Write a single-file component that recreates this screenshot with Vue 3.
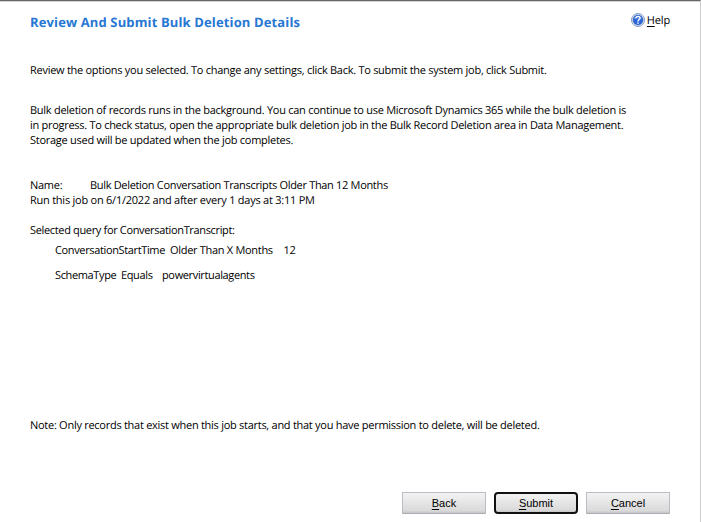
<script setup>
const criteria = [
  { field: 'ConversationStartTime', operator: 'Older Than X Months', value: '12', kind: 'time' },
  { field: 'SchemaType', operator: 'Equals', value: 'powervirtualagents', kind: 'schema' },
]
const buttons = [
  { key: 'B', rest: 'ack', primary: false },
  { key: 'S', rest: 'ubmit', primary: true },
  { key: 'C', rest: 'ancel', primary: false },
]
</script>

<template>
  <main class="dialog">
    <header>
      <h1>Review And Submit Bulk Deletion Details</h1>
      <a class="help">
        <svg width="14" height="14" viewBox="0 0 14 14">
          <circle cx="7" cy="7" r="6.5" fill="#e4edf8" stroke="#7793b8" stroke-width=".9" />
          <circle cx="7" cy="7" r="5" fill="#2d66d6" stroke="#2555b4" stroke-width=".5" />
          <path d="M3 6.4A4.1 4.1 0 0 1 11 6.4Q7 4.8 3 6.4Z" fill="#5b90ed" />
          <path d="M4.9 5.2C5 2.7 9.1 2.8 9.1 5C9.1 6.5 7 6.6 7 8.4" fill="none" stroke="#fff" stroke-width="1.4" />
          <rect x="6.3" y="9.4" width="1.4" height="1.4" fill="#fff" />
        </svg>
        <span><u>H</u>elp</span>
      </a>
    </header>
    <p class="intro"><span class="l1">Review the options you selected. To change any settings, click Back. To submit the system job, click Submit.</span></p>
    <p class="info">
      <span class="l2">Bulk deletion of records runs in the background. You can continue to use Microsoft Dynamics 365 while the bulk deletion is</span>
      <span class="l3">in progress. To check status, open the appropriate bulk deletion job in the Bulk Record Deletion area in Data Management.</span>
      <span class="l4">Storage used will be updated when the job completes.</span>
    </p>
    <section class="job">
      <div class="name"><span class="label">Name:</span><span class="l5">Bulk Deletion Conversation Transcripts Older Than 12 Months</span></div>
      <div class="l6">Run this job on 6/1/2022 and after every 1 days at 3:11 PM</div>
    </section>
    <section class="query">
      <div class="l7">Selected query for ConversationTranscript:</div>
      <div v-for="c in criteria" :key="c.field" class="row" :class="c.kind">
        <span class="field">{{ c.field }}</span><span class="op">{{ c.operator }}</span><span>{{ c.value }}</span>
      </div>
    </section>
    <p class="note"><span class="l8">Note: Only records that exist when this job starts, and that you have permission to delete, will be deleted.</span></p>
    <footer>
      <button v-for="b in buttons" :key="b.key" :class="{ primary: b.primary }"><span><u>{{ b.key }}</u>{{ b.rest }}</span></button>
    </footer>
  </main>
</template>

<style>
html, body { background: #fff; overflow: hidden; }
</style>

<style scoped>
* { box-sizing: border-box; }
.dialog {
  display: flex; flex-direction: column; height: 522px; padding: 11px 30px 0 30px;
  border-top: 1px solid #666; border-right: 1px solid #ccc; box-shadow: inset 0 1px #d4d4d4;
  background: #fff; color: #000; font: 11px/15px "Open Sans", "Noto Sans", sans-serif; white-space: nowrap;
  letter-spacing: -.27px; text-rendering: geometricPrecision;
}
header { display: flex; justify-content: space-between; height: 51px; }
h1 { margin: 0; color: #2777d3; font-size: 13px; line-height: 20px; font-weight: 700; letter-spacing: .13px; }
.help { display: flex; gap: 2px; height: 15px; align-items: center; letter-spacing: -.15px; }
.help span { padding-top: 2px; }
u { text-decoration: underline; text-underline-offset: 2px; text-decoration-thickness: 1px; }
p { margin: 0; }
.intro { height: 40px; }
.info { display: flex; flex-direction: column; align-items: flex-start; height: 75px; }
.l3 { letter-spacing: -.28px; }
.l5 { letter-spacing: -.32px; }
.l6 { letter-spacing: -.24px; }
.l7 { letter-spacing: -.34px; }
.job { height: 45px; }
.name { display: flex; }
.label { width: 60px; }
.query { height: 195px; }
.row { display: flex; height: 15px; margin: 5px 0 0 25px; letter-spacing: -.36px; }
.schema { margin-top: 10px; }
.time .field { width: 115px; }
.time .op { width: 113.5px; letter-spacing: -.3px; }
.time span:last-child { letter-spacing: -.3px; }
.schema .field { width: 66px; }
.schema .op { width: 41px; }
.note { height: 74px; }
footer { display: flex; justify-content: flex-end; gap: 8px; }
button {
  width: 84px; height: 22px; padding: 0; border: 1px solid #b9bdc4; border-bottom-color: #a9adb3; border-radius: 0;
  background: linear-gradient(#f3f3f3, #dadada 88%, #c6c6c6); color: #000; font: 11px/18px "Liberation Sans", Arial, sans-serif;
}
button.primary { border: 2px solid #101010; border-radius: 4px; }
</style>
